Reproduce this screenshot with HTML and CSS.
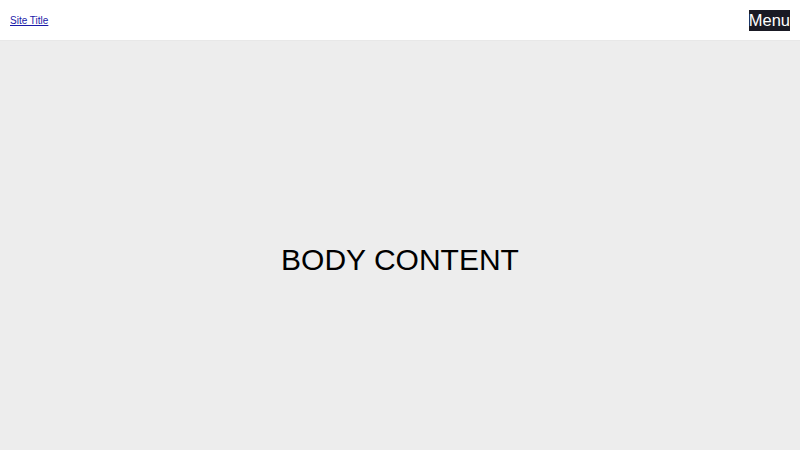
FILE: index.html
```html
<!DOCTYPE html>
<html>
<head>
<meta charset="utf-8">
<link rel="stylesheet" href="styles.css">
</head>
<body>
<header class="header">
  <a class="site-title" href="#">Site Title</a>
  <button class="menu">Menu</button>
</header>
<main class="main">
  <div class="content">BODY CONTENT</div>
</main>
</body>
</html>
```
FILE: styles.css
```css
html, body { margin: 0; padding: 0; height: 100%; }
body {
  font-family: "Liberation Sans", Arial, sans-serif;
  background: #ededed;
  display: flex;
  flex-direction: column;
}
.header {
  height: 41px;
  box-sizing: border-box;
  background: #fff;
  border-bottom: 1px solid #e8e8e8;
  display: flex;
  align-items: center;
  justify-content: space-between;
  padding: 0 10px;
}
.site-title {
  font-size: 10px;
  color: #1a1aa8;
}
.menu {
  background: #1a1a24;
  color: #fff;
  border: 0;
  font-family: "Liberation Sans", Arial, sans-serif;
  font-size: 16.5px;
  padding: 0;
  height: 21px;
  line-height: 21px;
}
.main {
  flex: 1;
  display: flex;
  align-items: center;
  justify-content: center;
  padding-top: 29px;
}
.content {
  font-size: 30px;
  color: #000;
}
```
